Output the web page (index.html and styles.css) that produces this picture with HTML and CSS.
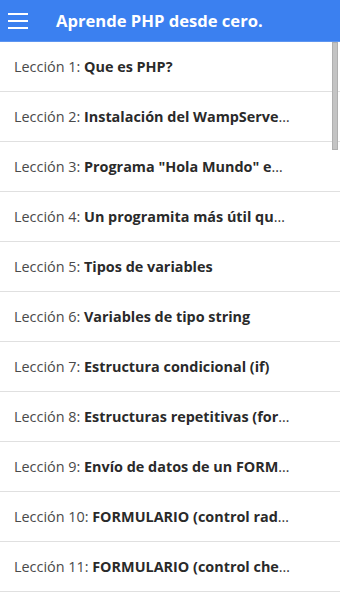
FILE: index.html
```html
<!DOCTYPE html>
<html lang="es">
<head>
  <meta charset="UTF-8">
  <meta name="viewport" content="width=device-width, initial-scale=1.0">
  <title>Aprende PHP desde cero.</title>
  <link rel="stylesheet" href="styles.css">
</head>
<body>
  <div class="header">
    <button class="menu-btn" aria-label="Menú">
      <span></span><span></span><span></span>
    </button>
    <h1>Aprende PHP desde cero.</h1>
  </div>

  <div class="list-wrap">
    <ul class="lessons">
      <li><span class="num">Lección 1:</span> <b>Que es PHP?</b></li>
      <li><span class="num">Lección 2:</span> <b>Instalación del WampServer (Apache, PHP y MySQL)</b></li>
      <li><span class="num">Lección 3:</span> <b>Programa "Hola Mundo" en PHP</b></li>
      <li><span class="num">Lección 4:</span> <b>Un programita más útil que el anterior</b></li>
      <li><span class="num">Lección 5:</span> <b>Tipos de variables</b></li>
      <li><span class="num">Lección 6:</span> <b>Variables de tipo string</b></li>
      <li><span class="num">Lección 7:</span> <b>Estructura condicional (if)</b></li>
      <li><span class="num">Lección 8:</span> <b>Estructuras repetitivas (for - while - do/while)</b></li>
      <li><span class="num">Lección 9:</span> <b>Envío de datos de un FORMULARIO</b></li>
      <li><span class="num">Lección 10:</span> <b>FORMULARIO (control radio)</b></li>
      <li><span class="num">Lección 11:</span> <b>FORMULARIO (control checkbox)</b></li>
      <li class="empty"></li>
    </ul>
    <div class="scroll-thumb"></div>
  </div>
</body>
</html>
```

FILE: styles.css
```css
* {
  margin: 0;
  padding: 0;
  box-sizing: border-box;
}

body {
  width: 340px;
  height: 605px;
  font-family: "Open Sans", "Noto Sans", sans-serif;
  background: #fff;
  color: #222;
  overflow: hidden;
}

.header {
  height: 42px;
  background: #3b80f0;
  display: flex;
  align-items: center;
  border-bottom: 1px solid #5d95f0;
}

.menu-btn {
  width: 56px;
  height: 40px;
  padding-left: 8px;
  border: none;
  background: transparent;
  display: flex;
  flex-direction: column;
  justify-content: center;
  gap: 5px;
}

.menu-btn span {
  display: block;
  width: 20px;
  height: 2px;
  background: #fff;
}

.header h1 {
  font-size: 16.6px;
  font-weight: 700;
  color: #fff;
}

.list-wrap {
  position: relative;
  height: 563px;
  overflow: hidden;
}

.lessons {
  list-style: none;
}

.lessons li {
  height: 50px;
  padding: 0 48px 0 14px;
  line-height: 50px;
  font-size: 14.4px;
  color: #333;
  border-bottom: 1px solid #e0e0e0;
  white-space: nowrap;
  overflow: hidden;
  text-overflow: ellipsis;
}

.lessons .num {
  color: #4a4a4a;
}

.lessons b {
  color: #2a2a2a;
  font-weight: 700;
}

.scroll-thumb {
  position: absolute;
  top: 0;
  right: 2px;
  width: 6px;
  height: 108px;
  background: #c4c4c4;
  border: 1px solid #b0b0b0;
}
```
